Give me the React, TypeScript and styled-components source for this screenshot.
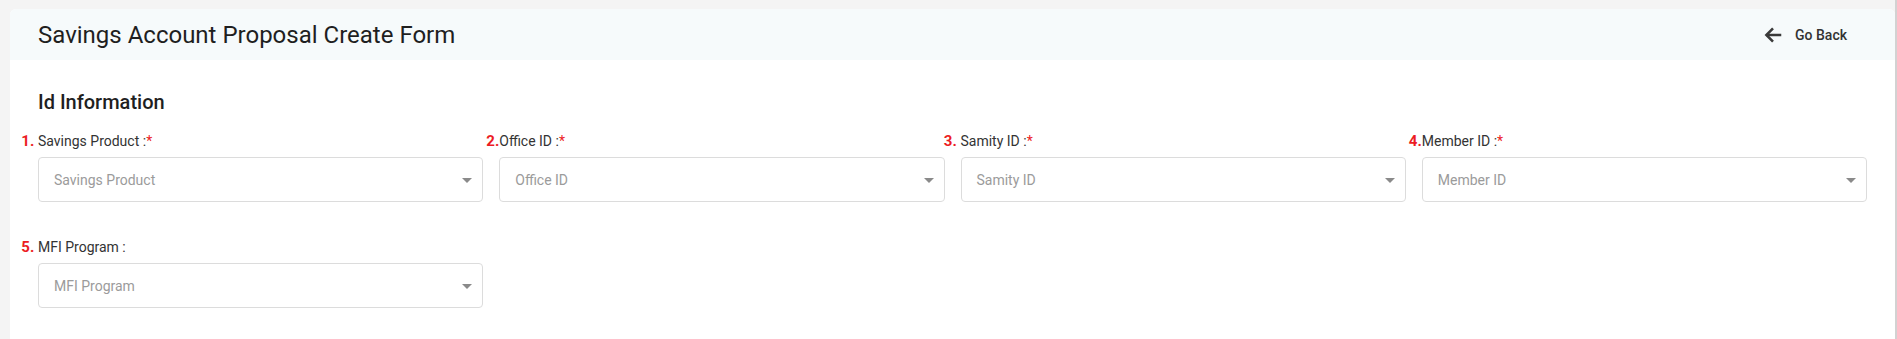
import React from "react";
import styled, { createGlobalStyle } from "styled-components";

const GlobalStyle = createGlobalStyle`
  html, body {
    margin: 0;
    padding: 0;
    background: #f4f4f4;
    font-family: Roboto, "Liberation Sans", Arial, sans-serif;
  }
  * { box-sizing: border-box; }
`;

const Page = styled.div`
  min-height: 339px;
  padding: 9px 0 0 10px;
  border-right: 2px solid #d2d2d2;
`;

const Card = styled.section`
  background: #ffffff;
  border-radius: 6px 6px 0 0;
  min-height: 400px;
  overflow: hidden;
`;

const Header = styled.header`
  height: 51px;
  background: #f6fafb;
  display: flex;
  align-items: center;
  justify-content: space-between;
  padding: 0 48px 0 28px;
`;

const Title = styled.h1`
  margin: 0;
  font-size: 24px;
  font-weight: 400;
  line-height: 28px;
  color: #1f1f1f;
`;

const BackButton = styled.button`
  display: flex;
  align-items: center;
  gap: 11px;
  border: none;
  background: transparent;
  padding: 0;
  font-family: inherit;
  font-size: 14px;
  font-weight: 500;
  color: #333;
  cursor: pointer;
`;

const BackIcon = styled.svg`
  width: 22px;
  height: 22px;
  fill: none;
  stroke: #3a3a3a;
  stroke-width: 2.8;
`;

const Body = styled.div`
  padding: 30px 28px 40px 12px;
`;

const SectionTitle = styled.h2`
  margin: 0 0 17px 16px;
  font-size: 20px;
  font-weight: 500;
  line-height: 24px;
  color: #1f1f1f;
`;

const Grid = styled.div`
  display: grid;
  grid-template-columns: repeat(4, 1fr);
  row-gap: 35px;
`;

const Field = styled.div`
  padding-left: 16px;
`;

const Label = styled.label`
  position: relative;
  display: block;
  font-size: 14px;
  line-height: 20px;
  color: #333;
  margin-bottom: 6px;
`;

const Num = styled.span`
  position: absolute;
  right: 100%;
  top: 0;
  white-space: pre;
  color: #ec1c24;
  font-weight: 700;
  font-size: 15px;
  line-height: 20px;
`;

const Star = styled.span`
  color: #ec1c24;
`;

const SelectBox = styled.div`
  height: 45px;
  border: 1px solid #dcdcdc;
  border-radius: 4px;
  display: flex;
  align-items: center;
  justify-content: space-between;
  padding: 0 3px 0 15px;
  background: #fff;
`;

const Placeholder = styled.span`
  font-size: 14px;
  color: #9b9b9b;
`;

const ArrowIcon = styled.svg`
  width: 24px;
  height: 24px;
  fill: #8a8a8a;
`;

type FieldDef = { num: string; label: string; required: boolean; placeholder: string };

const fields: FieldDef[] = [
  { num: "1. ", label: "Savings Product :", required: true, placeholder: "Savings Product" },
  { num: "2.", label: "Office ID :", required: true, placeholder: "Office ID" },
  { num: "3. ", label: "Samity ID :", required: true, placeholder: "Samity ID" },
  { num: "4.", label: "Member ID :", required: true, placeholder: "Member ID" },
  { num: "5. ", label: "MFI Program :", required: false, placeholder: "MFI Program" },
];

export default function App() {
  return (
    <>
      <GlobalStyle />
      <Page>
        <Card>
          <Header>
            <Title>Savings Account Proposal Create Form</Title>
            <BackButton>
              <BackIcon viewBox="0 0 24 24">
                <path d="M21 12H5" />
                <path d="M12 4.8L4.8 12L12 19.2" />
              </BackIcon>
              Go Back
            </BackButton>
          </Header>
          <Body>
            <SectionTitle>Id Information</SectionTitle>
            <Grid>
              {fields.map((f) => (
                <Field key={f.num}>
                  <Label>
                    <Num>{f.num}</Num>
                    {f.label}
                    {f.required && <Star>*</Star>}
                  </Label>
                  <SelectBox>
                    <Placeholder>{f.placeholder}</Placeholder>
                    <ArrowIcon viewBox="0 0 24 24">
                      <path d="M7 10l5 5 5-5z" />
                    </ArrowIcon>
                  </SelectBox>
                </Field>
              ))}
            </Grid>
          </Body>
        </Card>
      </Page>
    </>
  );
}
